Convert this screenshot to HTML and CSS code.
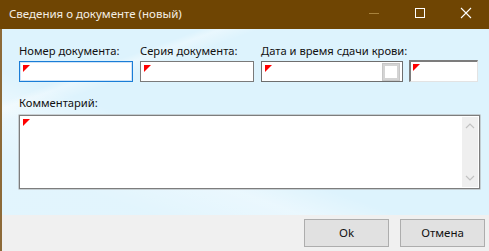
FILE: index.html
```html
<!DOCTYPE html>
<html lang="ru">
<head>
<meta charset="utf-8">
<link rel="stylesheet" href="styles.css">
</head>
<body>
<div class="window">
  <div class="titlebar">
    <span class="title">Сведения о документе (новый)</span>
    <div class="controls">
      <span class="ctl"><svg width="12" height="12" viewBox="0 0 12 12"><line x1="1" y1="6.5" x2="11" y2="6.5" stroke="#a8823c" stroke-width="1"/></svg></span>
      <span class="ctl"><svg width="12" height="12" viewBox="0 0 12 12"><rect x="1.5" y="1.5" width="9" height="9" fill="none" stroke="#ffffff" stroke-width="1"/></svg></span>
      <span class="ctl"><svg width="12" height="12" viewBox="0 0 12 12"><path d="M1 1 L11 11 M11 1 L1 11" stroke="#ffffff" stroke-width="1.1"/></svg></span>
    </div>
  </div>
  <div class="content">
    <div class="row">
      <div class="group g1">
        <label class="lbl">Номер документа:</label>
        <div class="field focused"><span class="mark"></span></div>
      </div>
      <div class="group g2">
        <label class="lbl">Серия документа:</label>
        <div class="field"><span class="mark"></span></div>
      </div>
      <div class="group g3">
        <label class="lbl">Дата и время сдачи крови:</label>
        <div class="dtrow">
          <div class="field date"><span class="mark"></span><span class="chk"></span></div>
          <div class="field sunken"><span class="mark"></span></div>
        </div>
      </div>
    </div>
    <div class="group comment">
      <label class="lbl">Комментарий:</label>
      <div class="memo">
        <span class="mark"></span>
        <div class="scroll">
          <svg width="10" height="6" viewBox="0 0 10 6"><path d="M1 5 L5 1 L9 5" fill="none" stroke="#c2c2c2" stroke-width="1.2"/></svg>
          <svg width="10" height="6" viewBox="0 0 10 6"><path d="M1 1 L5 5 L9 1" fill="none" stroke="#c2c2c2" stroke-width="1.2"/></svg>
        </div>
      </div>
    </div>
  </div>
  <div class="footer">
    <button class="btn">Ok</button>
    <button class="btn">Отмена</button>
  </div>
</div>
</body>
</html>
```
FILE: styles.css
```css
* { box-sizing: border-box; }
html, body { margin: 0; padding: 0; }
body {
  width: 489px;
  height: 251px;
  overflow: hidden;
  font-family: "Noto Sans", "Open Sans", sans-serif;
  font-size: 11.2px;
  color: #111111;
}
.window {
  display: flex;
  flex-direction: column;
  width: 489px;
  height: 251px;
}
.titlebar {
  height: 29px;
  flex: none;
  background: #6f4503;
  display: flex;
  align-items: center;
  justify-content: space-between;
  padding-left: 9px;
}
.title {
  color: #f4eee4;
  font-size: 11.5px;
  line-height: 16px;
  margin-top: -1px;
}
.controls {
  display: flex;
  align-self: stretch;
}
.ctl {
  width: 46px;
  display: flex;
  align-items: center;
  justify-content: center;
}
.ctl svg { display: block; margin-top: -3px; }
.content {
  flex: 1;
  border-left: 2px solid #8d6a38;
  background:
    linear-gradient(160deg, rgba(255,255,255,0) 0%, rgba(255,255,255,0) 20%, rgba(255,255,255,0.35) 22%, rgba(255,255,255,0) 26%, rgba(255,255,255,0) 100%),
    linear-gradient(200deg, rgba(255,255,255,0) 60%, rgba(255,255,255,0.4) 70%, rgba(255,255,255,0.15) 85%),
    #ddf3fd;
  padding: 14px 0 0 17px;
  display: flex;
  flex-direction: column;
}
.row {
  display: flex;
  gap: 7px;
  align-items: flex-start;
}
.group {
  display: flex;
  flex-direction: column;
  gap: 2px;
}
.lbl {
  line-height: 16px;
  height: 16px;
  white-space: nowrap;
}
.field {
  position: relative;
  height: 21px;
  background: #ffffff;
  border: 1px solid #7a7a7a;
}
.g1 .field, .g2 .field { width: 114px; }
.field.focused { border: 1px solid #1a7dd7; box-shadow: inset 0 0 0 1px #cfe3f6; }
.dtrow { display: flex; gap: 6px; align-items: flex-start; }
.field.date { width: 142px; border-color: #6e6e6e; }
.field.sunken {
  width: 69px;
  height: 22px;
  margin-top: -1px;
  border-top: 2px solid #7c7c7c;
  border-left: 2px solid #7c7c7c;
  border-right: 1px solid #e3e3e3;
  border-bottom: 1px solid #e3e3e3;
}
.mark {
  position: absolute;
  left: 3px;
  top: 3px;
  width: 7px;
  height: 7px;
  background: #ff0000;
  clip-path: polygon(0 0, 100% 0, 0 100%);
}
.field.sunken .mark { left: 2px; top: 2px; }
.chk {
  position: absolute;
  right: 2px;
  top: 1px;
  width: 18px;
  height: 18px;
  background: #ffffff;
  border: 3px solid #d4d4d4;
  outline: 1px solid #c6c6c6;
  outline-offset: -1px;
}
.comment { margin-top: 13px; gap: 4px; }
.memo {
  position: relative;
  width: 461px;
  height: 74px;
  background: #ffffff;
  border: 1px solid #7d7d7d;
  box-shadow: 0 0 0 0.5px #a8a8a8;
}
.scroll {
  position: absolute;
  right: 1px;
  top: 1px;
  bottom: 1px;
  width: 16px;
  background: #efefef;
  display: flex;
  flex-direction: column;
  justify-content: space-between;
  align-items: center;
  padding: 6px 0 6px;
}
.scroll svg { display: block; }
.footer {
  height: 36px;
  flex: none;
  background: #f0f0f0;
  border-left: 2px solid #8d6a38;
  display: flex;
  justify-content: flex-end;
  align-items: flex-start;
  gap: 11px;
  padding: 4px 4px 0 0;
}
.btn {
  width: 85px;
  height: 28px;
  background: #e1e1e1;
  border: 1px solid #adadad;
  font-family: "Noto Sans", "Open Sans", sans-serif;
  font-size: 11.5px;
  color: #111111;
  padding: 0 0 2px;
}
```
